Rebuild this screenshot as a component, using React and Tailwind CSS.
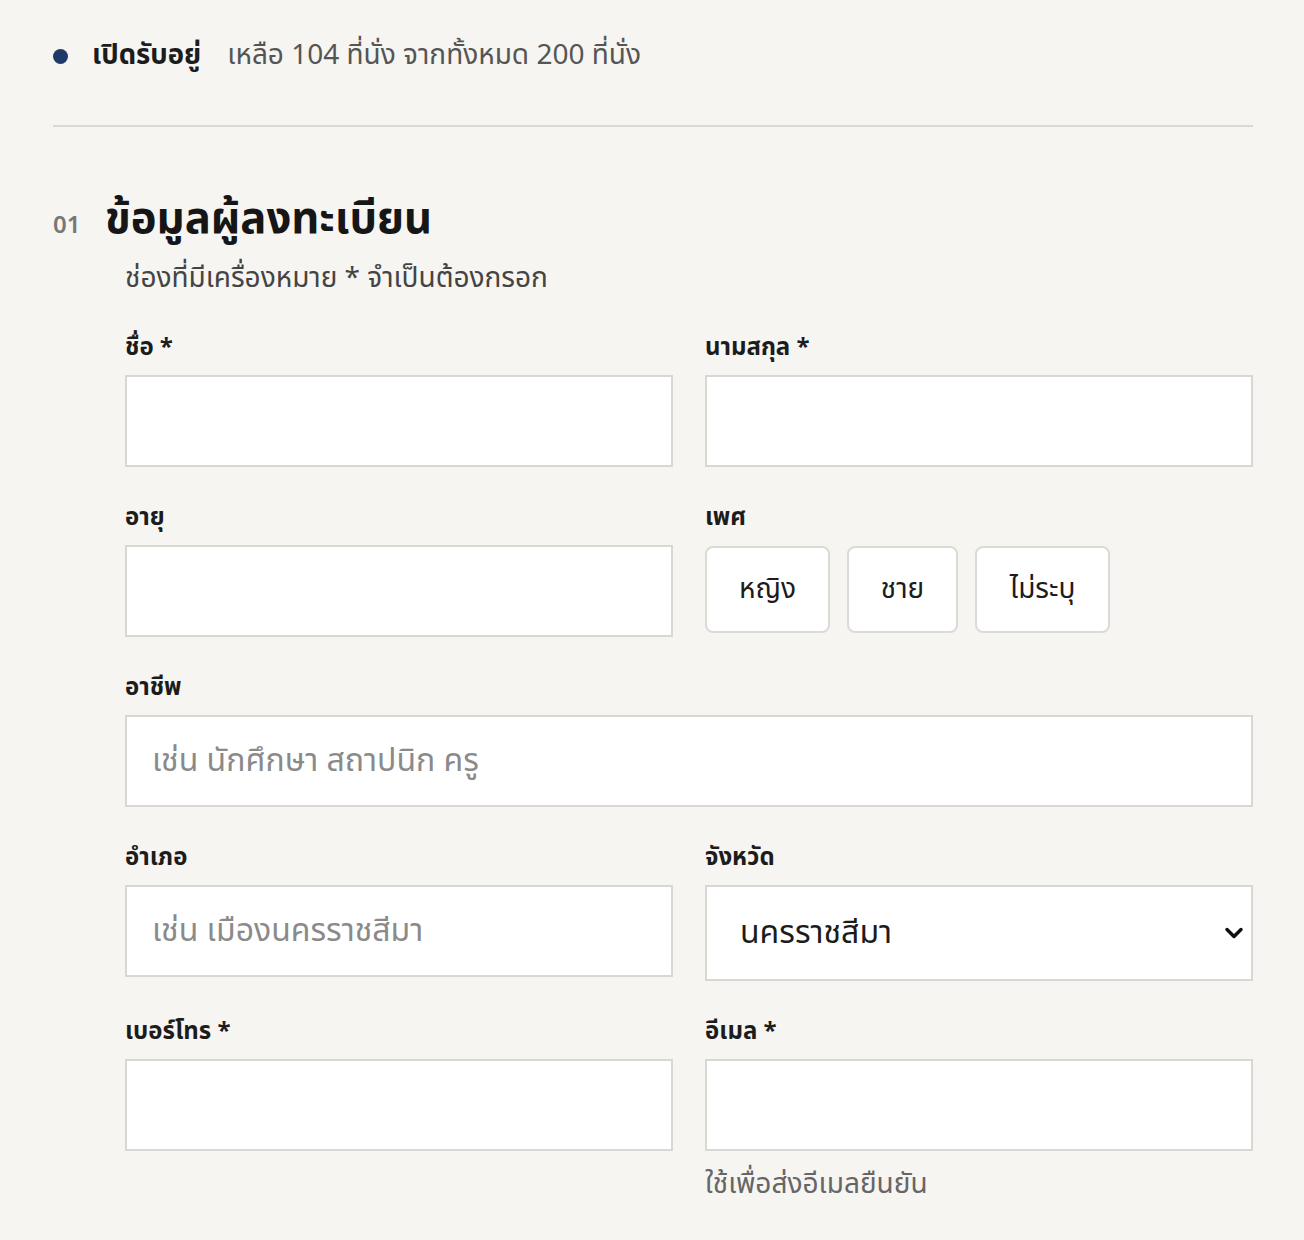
import React from "react";

const font = { fontFamily: '"Noto Sans Thai", "Noto Sans Thai UI", "Noto Sans", sans-serif' };

function Label({ children }) {
  return <div className="text-[24px] font-bold text-[#1c1c1c] leading-[26px] h-[26px] mb-[14px] whitespace-nowrap">{children}</div>;
}

function Input({ placeholder }) {
  return (
    <div className="h-[92px] bg-white border-2 border-[#d9d7d1] flex items-center px-[25px]">
      {placeholder && <span className="text-[32px] text-[#8a8a8a]">{placeholder}</span>}
    </div>
  );
}

export default function App() {
  return (
    <div className="min-h-[1240px] bg-[#f6f5f2] text-[#1c1c1c]" style={font}>
      <div className="ml-[53px] w-[1200px] pt-[30px]">
        <div className="flex items-center h-[52px]">
          <span className="w-[15px] h-[15px] rounded-full bg-[#1f3a68]"></span>
          <span className="ml-[24px] text-[27.5px] font-bold text-[#1c1c1c]">เปิดรับอยู่</span>
          <span className="ml-[26px] text-[28px] text-[#555]">เหลือ 104 ที่นั่ง จากทั้งหมด 200 ที่นั่ง</span>
        </div>
        <div className="mt-[43px] h-[2px] bg-[#dad8d2]"></div>

        <div className="mt-[65px] flex items-baseline h-[56px]">
          <span className="text-[24px] font-semibold text-[#777] w-[52px]">01</span>
          <h1 className="text-[43.5px] font-bold leading-[56px] text-[#161616] whitespace-nowrap">ข้อมูลผู้ลงทะเบียน</h1>
        </div>
        <div className="ml-[72px] mt-[11px] text-[28px] text-[#444] leading-[40px]">ช่องที่มีเครื่องหมาย * จำเป็นต้องกรอก</div>

        <div className="ml-[72px] mt-[36px] grid grid-cols-2 gap-x-[32px] gap-y-[38px]">
          <div>
            <Label>ชื่อ *</Label>
            <Input />
          </div>
          <div>
            <Label>นามสกุล *</Label>
            <Input />
          </div>
          <div>
            <Label>อายุ</Label>
            <Input />
          </div>
          <div>
            <Label>เพศ</Label>
            <div className="flex gap-[17px] pt-[1px]">
              {[["หญิง", "w-[125px]"], ["ชาย", "w-[111px]"], ["ไม่ระบุ", "w-[135px]"]].map(([t, w]) => (
                <div key={t} className={`${w} h-[87px] bg-white border-2 border-[#dcdad4] rounded-[8px] flex items-center justify-center text-[28px] text-[#1c1c1c]`}>
                  {t}
                </div>
              ))}
            </div>
          </div>
          <div className="col-span-2">
            <Label>อาชีพ</Label>
            <Input placeholder="เช่น นักศึกษา สถาปนิก ครู" />
          </div>
          <div>
            <Label>อำเภอ</Label>
            <Input placeholder="เช่น เมืองนครราชสีมา" />
          </div>
          <div>
            <Label>จังหวัด</Label>
            <div className="h-[96px] bg-white border-2 border-[#d9d7d1] flex items-center justify-between pl-[33px] pr-[7px]">
              <span className="text-[32px] text-[#1c1c1c]">นครราชสีมา</span>
              <svg width="20" height="12" viewBox="0 0 20 12" fill="none" stroke="#111" strokeWidth="3.5" strokeLinecap="round" strokeLinejoin="round">
                <path d="M3 2.5L10 9.5L17 2.5" />
              </svg>
            </div>
          </div>
          <div>
            <Label>เบอร์โทร *</Label>
            <Input />
          </div>
          <div>
            <Label>อีเมล *</Label>
            <Input />
            <div className="mt-[14px] text-[28px] text-[#666] leading-[40px]">ใช้เพื่อส่งอีเมลยืนยัน</div>
          </div>
        </div>
      </div>
    </div>
  );
}
